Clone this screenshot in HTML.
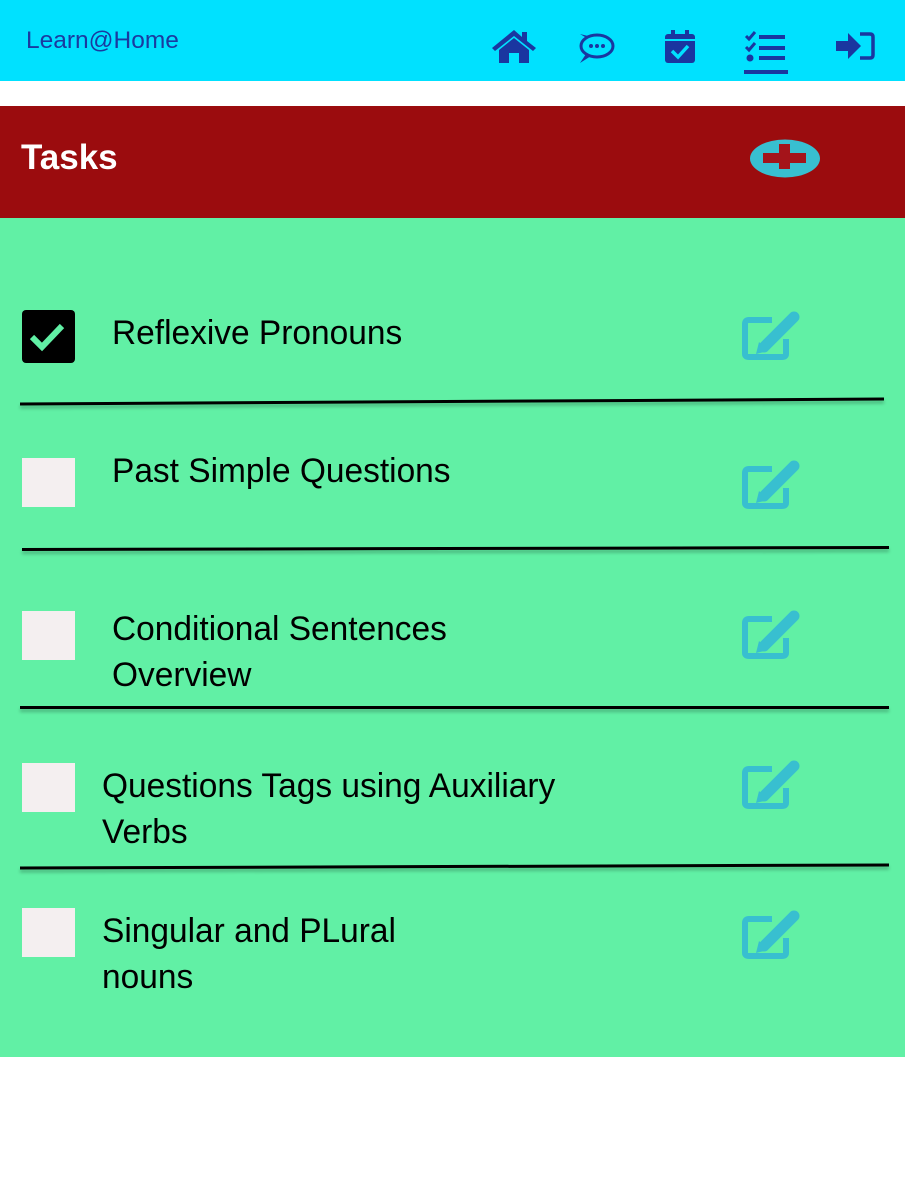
<!DOCTYPE html>
<html><head><meta charset="utf-8"><style>
body{margin:0;width:905px;height:1183px;background:#fff;position:relative;overflow:hidden;font-family:"Liberation Sans",sans-serif}
.hdr{position:absolute;left:0;top:0;width:905px;height:81px;background:#00e1ff}
.brand{position:absolute;left:26px;top:27px;font-size:24.5px;color:#1a3aa0}
.ic{position:absolute}
.bar{position:absolute;left:0;top:106px;width:905px;height:112px;background:#9b0c0e}
.green{position:absolute;left:0;top:218px;width:905px;height:839px;background:#61f0a5}
.t{position:absolute;font-size:34.5px;color:#000;line-height:46px;transform:scaleX(0.97);transform-origin:left}
.cb{position:absolute;left:22px;width:53px;height:49px;background:#f4eff0}
.ln{position:absolute;height:3px;background:#000;box-shadow:0 3px 3px rgba(0,0,0,.25)}
</style></head><body>
<div class="hdr"></div>
<div class="brand">Learn@Home</div>
<svg class="ic" style="left:490px;top:28px" width="48" height="38" viewBox="0 0 48 38"><path d="M2 20 L24 2 L32 9 V4 H37 V13 L46 20 L43 23 L24 8 L5 23Z M9 22 L24 10 L39 22 V35 H29 V25 H19 V35 H9Z" fill="#1a36a0"/></svg>
<svg class="ic" style="left:577px;top:31px" width="38" height="34" viewBox="0 0 38 34"><ellipse cx="20" cy="15" rx="16" ry="11" fill="none" stroke="#1a36a0" stroke-width="3"/><path d="M8 6 L3 3 L11 5Z M9 23 L3 32 L14 25Z" fill="#1a36a0"/><circle cx="14" cy="15" r="2" fill="#1a36a0"/><circle cx="20" cy="15" r="2" fill="#1a36a0"/><circle cx="26" cy="15" r="2" fill="#1a36a0"/></svg>
<svg class="ic" style="left:664px;top:30px" width="32" height="34" viewBox="0 0 32 34"><rect x="1" y="4" width="30" height="29" rx="3" fill="#1a36a0"/><rect x="7" y="0" width="4" height="8" fill="#1a36a0"/><rect x="21" y="0" width="4" height="8" fill="#1a36a0"/><rect x="1" y="9" width="30" height="2" fill="#00e1ff"/><path d="M8 21 L14 27 L24 16" fill="none" stroke="#00e1ff" stroke-width="3.5"/></svg>
<svg class="ic" style="left:744px;top:30px" width="44" height="45" viewBox="0 0 44 45"><path d="M2 6 L5 9 L11 2 M2 17 L5 20 L11 13" fill="none" stroke="#1a36a0" stroke-width="3"/><circle cx="6" cy="28" r="3.5" fill="#1a36a0"/><rect x="15" y="5" width="26" height="4" fill="#1a36a0"/><rect x="15" y="16" width="26" height="4" fill="#1a36a0"/><rect x="15" y="26" width="26" height="4" fill="#1a36a0"/><rect x="-1" y="40" width="45" height="4" fill="#1a36a0"/></svg>
<svg class="ic" style="left:835px;top:31px" width="42" height="30" viewBox="0 0 42 30"><path d="M1 10 H13 V2 L26 15 L13 28 V20 H1Z" fill="#1a36a0"/><path d="M25 3 H35 Q38 3 38 6 V24 Q38 27 35 27 H25" fill="none" stroke="#1a36a0" stroke-width="3.5"/></svg>
<div class="bar"></div>
<div style="position:absolute;left:21px;top:138px;color:#fff;font-weight:bold;font-size:35px">Tasks</div>
<svg class="ic" style="left:749px;top:139px" width="72" height="39"><ellipse cx="36" cy="19.5" rx="35" ry="19" fill="#38bfd0"/><rect x="14" y="14" width="43" height="10" fill="#a4141a"/><rect x="30" y="5" width="11" height="25" fill="#a4141a"/></svg>
<div class="green"></div>
<div style="position:absolute;left:22px;top:310px;width:53px;height:53px;background:#000;border-radius:4px"></div>
<svg class="ic" style="left:22px;top:310px" width="53" height="53"><path d="M10 27 L20 37 L40 16" fill="none" stroke="#61f0a5" stroke-width="6"/></svg>
<div class="t" style="left:112px;top:310px">Reflexive Pronouns</div>
<div class="ln" style="left:20px;top:400px;width:864px;transform:rotate(-0.33deg)"></div>
<div class="cb" style="top:458px"></div>
<div class="t" style="left:112px;top:448px">Past Simple Questions</div>
<div class="ln" style="left:22px;top:547px;width:867px;transform:rotate(-0.13deg)"></div>
<div class="cb" style="top:611px"></div>
<div class="t" style="left:112px;top:606px">Conditional Sentences<br>Overview</div>
<div class="ln" style="left:20px;top:706px;width:869px"></div>
<div class="cb" style="top:763px"></div>
<div class="t" style="left:102px;top:763px">Questions Tags using Auxiliary<br>Verbs</div>
<div class="ln" style="left:20px;top:865px;width:869px;transform:rotate(-0.2deg)"></div>
<div class="cb" style="top:908px"></div>
<div class="t" style="left:102px;top:908px">Singular and PLural<br>nouns</div>
<svg width="0" height="0" style="position:absolute"><defs><g id="ed"><path d="M30 11 H7 Q3 11 3 15 V45 Q3 48 7 48 H40 Q44 48 44 45 V30" fill="none" stroke="#38bfd0" stroke-width="6"/><path d="M22 38 L52 8" stroke="#38bfd0" stroke-width="11" stroke-linecap="round"/><path d="M14 45 L17 33 L26 42Z" fill="#38bfd0"/></g></defs></svg>
<svg class="ic" style="left:742px;top:309px" width="60" height="52"><use href="#ed"/></svg>
<svg class="ic" style="left:742px;top:458px" width="60" height="52"><use href="#ed"/></svg>
<svg class="ic" style="left:742px;top:608px" width="60" height="52"><use href="#ed"/></svg>
<svg class="ic" style="left:742px;top:758px" width="60" height="52"><use href="#ed"/></svg>
<svg class="ic" style="left:742px;top:908px" width="60" height="52"><use href="#ed"/></svg>
</body></html>
